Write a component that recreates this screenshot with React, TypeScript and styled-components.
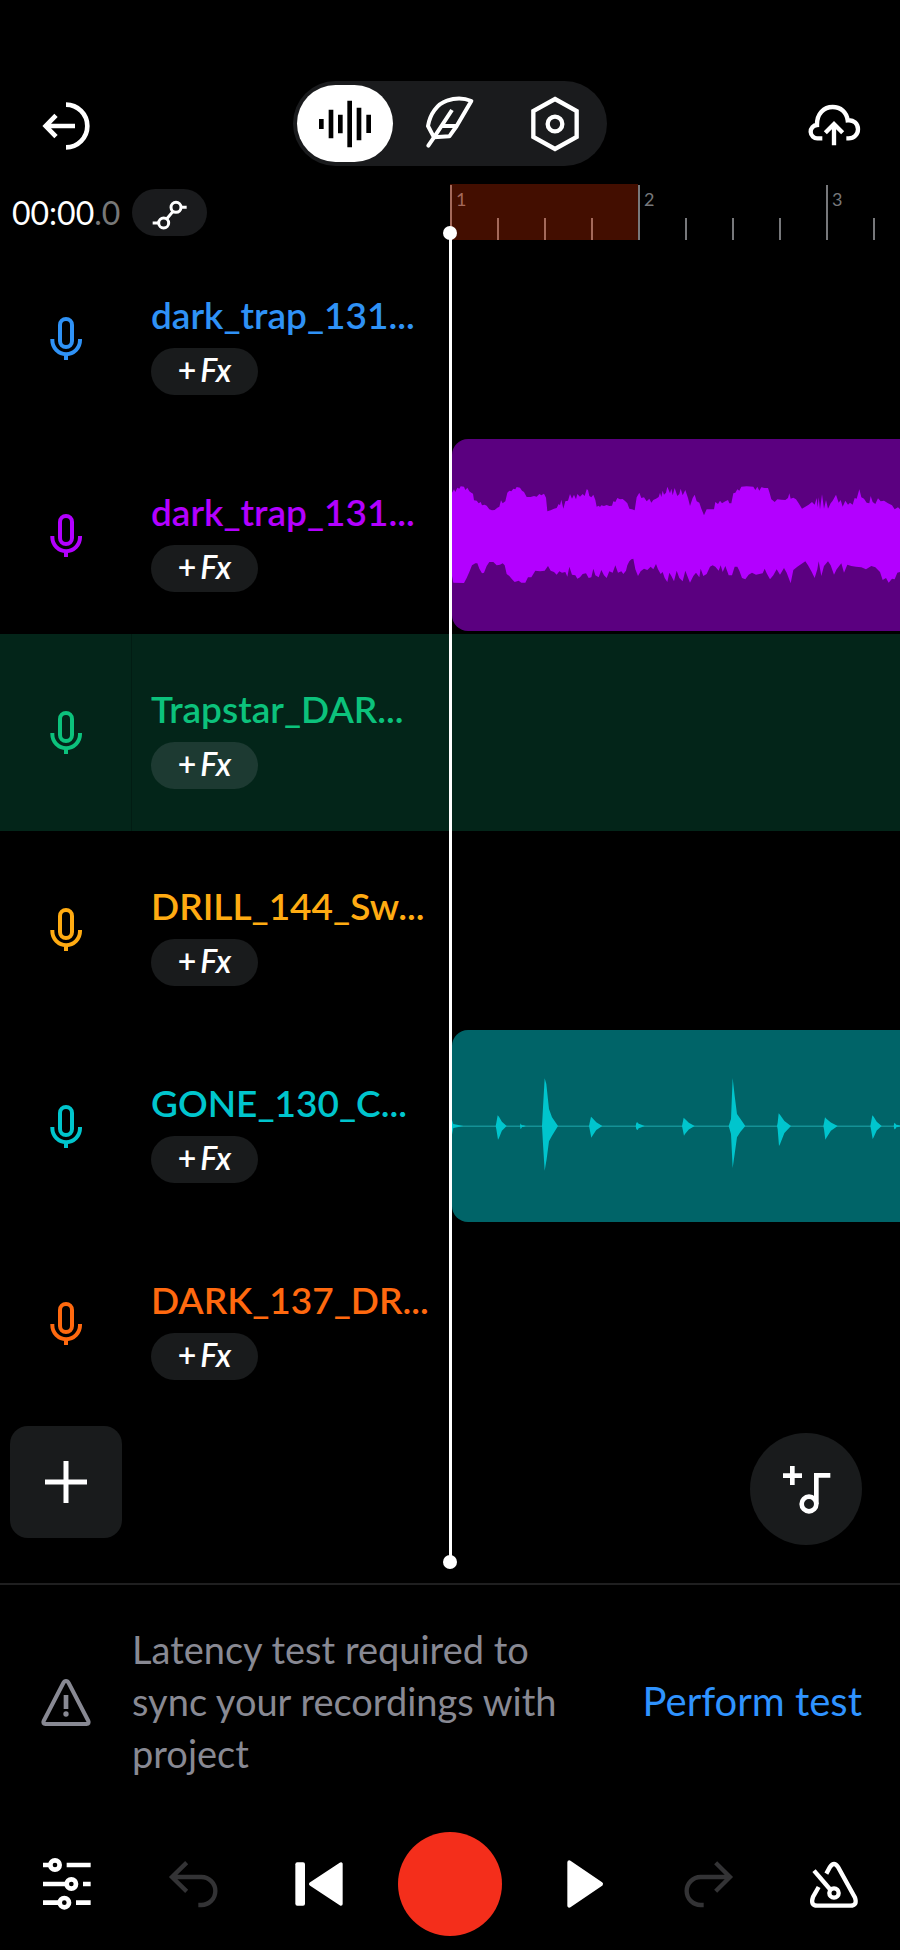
import React from "react";
import styled, { createGlobalStyle } from "styled-components";

const GlobalStyle = createGlobalStyle`
  * { box-sizing: border-box; }
  body { margin: 0; background: #000; }
  button { border: 0; padding: 0; margin: 0; background: none; color: inherit; font: inherit; cursor: pointer; }
`;

const Screen = styled.main`
  display: flex;
  flex-direction: column;
  min-height: 100vh;
  padding-top: 81px;
  overflow: hidden;
  background: #000;
  color: #fff;
  font-family: Lato, "Open Sans", sans-serif;
`;

const Header = styled.header`
  display: flex;
  align-items: center;
  justify-content: space-between;
`;

const HeaderButton = styled.button`
  display: grid;
  place-items: center;
  width: 132px;
  padding-top: 4px;
`;

const ViewSwitch = styled.nav`
  display: flex;
  gap: 9px;
  padding: 4px;
  border-radius: 43px;
  background: #1a1b1d;
`;

const ViewButton = styled.button<{ $active?: boolean }>`
  display: grid;
  place-items: center;
  width: 96px;
  height: 77px;
  border-radius: 39px;
  background: ${(p) => (p.$active ? "#fff" : "transparent")};
  color: ${(p) => (p.$active ? "#000" : "#fff")};
`;

const Timeline = styled.section`
  position: relative;
  margin-top: 18px;
  border-bottom: 2px solid #1f1f20;
`;

const TimeRow = styled.div`
  display: grid;
  grid-template-columns: 50% 50%;
  height: 56px;
`;

const Clock = styled.div`
  display: flex;
  align-items: center;
  gap: 11px;
  padding-left: 12px;
  font-size: 32px;
`;

const Time = styled.time`
  width: 109px;
  span { color: #777; }
`;

const AutomationButton = styled.button`
  display: grid;
  place-items: center;
  width: 75px;
  height: 47px;
  border-radius: 24px;
  background: #1a1b1d;
`;

const Ruler = styled.div`
  display: flex;
  overflow: hidden;
`;

const Bar = styled.div<{ $loop?: boolean }>`
  display: grid;
  flex: 0 0 188px;
  grid-template-columns: repeat(4, 1fr);
  align-items: end;
  color: ${(p) => (p.$loop ? "#a4695b" : "#77787b")};
  background: ${(p) => (p.$loop ? "#430e00" : "transparent")};
`;

const Beat = styled.span<{ $first?: boolean }>`
  height: ${(p) => (p.$first ? 55 : 22)}px;
  padding: 3px 0 0 4px;
  border-left: 2px solid currentColor;
  font-size: 18px;
  line-height: 22px;
`;

const TrackList = styled.ul`
  list-style: none;
  margin: 0;
  padding: 0;
`;

const Track = styled.li<{ $selected?: boolean }>`
  display: grid;
  grid-template-columns: 50% 50%;
  height: 197px;
  background: ${(p) => (p.$selected ? "#032519" : "transparent")};
`;

const TrackHead = styled.div`
  display: grid;
  grid-template-columns: 132px minmax(0, 1fr);
`;

const TrackIcon = styled.div<{ $color: string; $selected?: boolean }>`
  display: grid;
  place-items: center;
  padding-bottom: 2px;
  color: ${(p) => p.$color};
  border-right: 1px solid ${(p) => (p.$selected ? "#021c13" : "transparent")};
`;

const TrackInfo = styled.div`
  display: flex;
  flex-direction: column;
  align-items: flex-start;
  gap: 10px;
  padding: 52px 0 0 19px;
`;

const TrackName = styled.h2<{ $color: string }>`
  margin: 0;
  color: ${(p) => p.$color};
  font-size: 37px;
  font-weight: 600;
  line-height: 46px;
  white-space: nowrap;
`;

const FxButton = styled.button<{ $selected?: boolean }>`
  display: flex;
  align-items: center;
  justify-content: center;
  gap: 4px;
  width: 107px;
  height: 47px;
  padding-bottom: 4px;
  border-radius: 24px;
  background: ${(p) => (p.$selected ? "#1d3a32" : "#191b1c")};
  color: #fff;
  font-size: 32px;
  font-weight: 600;
  line-height: 36px;
  em { font-style: italic; }
`;

const Clip = styled.div<{ $color: string }>`
  height: 192px;
  margin: 2px 0 0 2px;
  overflow: hidden;
  border-radius: 16px 0 0 16px;
  background: ${(p) => p.$color};
  svg { display: block; width: 100%; height: 100%; }
`;

const Actions = styled.div`
  display: flex;
  align-items: flex-start;
  justify-content: space-between;
  height: 161px;
  padding: 4px 38px 0 10px;
`;

const AddTrack = styled.button`
  display: grid;
  place-items: center;
  width: 112px;
  height: 112px;
  border-radius: 18px;
  background: #191b1c;
`;

const AddSound = styled(AddTrack)`
  margin-top: 7px;
  border-radius: 50%;
`;

const Playhead = styled.div`
  position: absolute;
  top: 49px;
  bottom: 21px;
  left: 50%;
  width: 3px;
  margin-left: -1px;
  background: #fff;
  &::before, &::after {
    content: "";
    position: absolute;
    left: -6px;
    width: 14px;
    height: 14px;
    border-radius: 50%;
    background: #fff;
  }
  &::before { top: -7px; }
  &::after { bottom: -7px; }
`;

const Notice = styled.section`
  display: grid;
  grid-template-columns: 132px minmax(0, 450px) 1fr;
  align-items: center;
  padding: 38px 38px 38px 0;
  color: #888993;
`;

const NoticeIcon = styled.div`
  display: grid;
  place-items: center;
`;

const NoticeText = styled.p`
  margin: 0;
  font-size: 38px;
  line-height: 52px;
`;

const TestButton = styled.button`
  justify-self: end;
  color: #2f93ff;
  font-size: 40px;
  line-height: 52px;
  white-space: nowrap;
`;

const Transport = styled.footer`
  display: grid;
  grid-template-columns: repeat(7, 1fr);
  align-items: center;
  justify-items: center;
  padding: 15px 2px 14px;
`;

const TransportButton = styled.button`
  display: grid;
  place-items: center;
  &:disabled { color: #333335; }
`;

const RecordButton = styled.button`
  width: 104px;
  height: 104px;
  border-radius: 50%;
  background: #f42e1b;
`;

const Svg = styled.svg`
  display: block;
  width: 52px;
  height: 52px;
  overflow: visible;
`;

type IconProps = { width?: number; children: React.ReactNode };

const Icon = ({ width = 13, children }: IconProps) => (
  <Svg viewBox="0 0 156 156" fill="none" stroke="currentColor" strokeWidth={width} aria-hidden="true">
    {children}
  </Svg>
);

const ExitIcon = () => (
  <Icon width={14}>
    <path d="M78 14a64 64 0 0 1 0 128" />
    <path d="M105 78H18M48 46L17 78l31 32" />
  </Icon>
);

const WaveIcon = () => (
  <Icon width={14}>
    <path d="M7 63v30M36 35v86M64 50v56M92 8v140M120 29v98M149 50v55" />
  </Icon>
);

const FeatherIcon = () => (
  <Icon width={12}>
    <path strokeLinejoin="round" d="M30 118L12 84c6-36 27-66 57-76 22-8 48-10 73 1L98 84 76 115z" />
    <path strokeLinecap="round" d="M13 143l17-25" />
    <path d="M30 118L84 36M56 84h42" />
  </Icon>
);

const HexIcon = () => (
  <Icon>
    <path d="M78 3l65 36v78l-65 36-65-36V39z" />
    <circle cx="78" cy="78" r="22" />
  </Icon>
);

const CloudIcon = () => (
  <Icon>
    <path d="M43 115H29a20 20 0 0 1-2-40c-1-34 21-54 47-54 24 0 42 16 45 40 18-2 31 10 31 27 0 15-12 27-28 27h-7" />
    <path d="M78 136V72M52 98l26-26 26 26" />
  </Icon>
);

const AutomationIcon = () => (
  <Icon width={9}>
    <circle cx="59" cy="102" r="15" />
    <circle cx="96" cy="55" r="15" />
    <path d="M26 102h18M111 55h17M68 90l19-23" />
  </Icon>
);

const MicIcon = () => (
  <Icon width={12}>
    <rect x="60" y="21" width="36" height="84" rx="18" />
    <path d="M37 81v4a41 41 0 0 0 83 0v-4M78 126v18" />
  </Icon>
);

const PlusIcon = () => (
  <Icon width={15}>
    <path d="M15 78h126M78 15v126" />
  </Icon>
);

const AddNoteIcon = () => (
  <Icon width={14}>
    <path d="M9 38h57M37 9v57M109 123V37h42" />
    <circle cx="87" cy="123" r="22" />
  </Icon>
);

const WarningIcon = () => (
  <Icon width={12}>
    <path d="M78 18q-5 0-8 6L11 138q-4 8 6 9h122q10-1 6-9L86 24q-3-6-8-6z" />
    <path d="M78 60v42" strokeWidth={14} />
    <circle cx="78" cy="117" r="8" fill="currentColor" stroke="none" />
  </Icon>
);

const MixerIcon = () => (
  <Icon width={14}>
    <path d="M9 21h22M80 21h72M9 78h71M129 78h23M9 134h50M108 134h44" />
    <circle cx="45" cy="21" r="14" />
    <circle cx="94" cy="78" r="14" />
    <circle cx="73" cy="134" r="14" />
  </Icon>
);

const UndoIcon = () => (
  <Icon>
    <path d="M56 14L12 57l44 43M12 57h88a42 42 0 0 1 0 84h-9" />
  </Icon>
);

const RedoIcon = () => (
  <Icon>
    <path d="M107 14l43 43-43 43M150 57H62a42 42 0 0 0 0 84h9" />
  </Icon>
);

const PreviousIcon = () => (
  <Icon width={10}>
    <rect x="-2" y="13" width="29" height="130" rx="6" fill="currentColor" stroke="none" />
    <path d="M44 78l91-60v120z" fill="currentColor" strokeLinejoin="round" />
  </Icon>
);

const PlayIcon = () => (
  <Icon width={12}>
    <path d="M52 13l95 65-95 65z" fill="currentColor" strokeLinejoin="round" />
  </Icon>
);

const MetronomeIcon = () => (
  <Icon>
    <path d="M55 47l11-20q12-18 24 0l51 92q8 24-14 24H28q-22 0-13-26l17-30" />
    <path d="M18 38l50 58" />
    <circle cx="78" cy="105" r="14" />
  </Icon>
);

const LOUD_TOP =
  "36,190 42,180 46,188 52,175 58,178 62,171 72,172 76,182 82,175 88,186 94,190 99,193 102,213 110,214 116,222 122,218 126,228 134,226 140,229 148,240 156,243 164,242 172,235 178,232 183,213 188,222 196,216 202,190 208,184 214,186 220,178 226,180 230,173 240,175 246,184 252,188 260,203 272,203 282,200 290,202 298,194 304,198 312,193 318,205 322,246 332,243 342,238 350,236 356,224 360,228 364,211 370,238 376,216 384,214 390,194 396,208 402,196 408,210 412,194 420,202 428,194 434,200 440,180 444,182 448,200 454,204 460,196 466,212 470,232 476,229 480,233 484,228 492,230 500,227 508,230 516,229 520,216 526,218 532,206 540,210 548,209 556,216 562,222 568,238 576,240 584,243 590,204 598,190 604,206 612,204 620,216 628,208 634,220 640,212 648,208 656,203 660,190 664,203 668,184 672,196 678,190 682,172 690,192 694,178 698,198 704,176 712,200 718,194 722,178 728,198 736,182 744,206 750,230 758,206 764,196 770,216 778,220 784,238 792,258 800,240 812,240 822,240 826,218 834,224 840,214 846,222 856,216 864,212 868,222 874,222 880,192 886,190 892,180 898,184 904,172 920,171 940,172 946,182 952,172 958,184 964,174 974,176 984,176 988,188 994,210 1004,218 1012,210 1024,211 1036,212 1044,206 1048,192 1052,208 1060,205 1068,210 1076,222 1086,238 1096,232 1106,226 1116,218 1124,226 1130,206 1133,234 1136,204 1140,240 1146,195 1152,238 1158,212 1164,238 1172,222 1178,214 1188,196 1196,220 1202,212 1208,232 1216,214 1224,226 1230,220 1238,226 1244,206 1250,208 1258,180 1264,204 1272,208 1280,220 1288,222 1292,200 1298,218 1306,224 1314,207 1322,216 1332,214 1344,222 1356,228 1364,240 1374,234 1380,240";

const LOUD_BOTTOM =
  "1380,428 1372,430 1364,450 1356,448 1346,460 1338,446 1328,452 1320,428 1306,414 1294,410 1278,420 1264,414 1248,412 1234,410 1222,406 1212,430 1204,402 1190,420 1182,436 1172,408 1164,396 1152,410 1144,440 1136,396 1132,420 1124,446 1114,426 1104,408 1096,396 1084,404 1072,412 1060,422 1052,462 1040,430 1032,416 1020,436 1010,420 1000,438 990,450 980,432 974,418 968,432 958,434 948,436 936,430 926,436 916,450 906,446 898,424 892,412 884,412 876,438 866,438 856,410 848,428 842,408 836,424 826,412 818,408 810,412 800,434 790,440 782,418 778,444 768,430 760,440 750,460 742,440 736,424 728,456 718,446 710,424 702,456 694,440 688,430 682,458 674,446 668,428 662,434 654,420 648,404 640,420 632,412 622,422 612,418 602,426 594,440 586,420 580,388 574,390 568,396 562,408 558,424 550,434 544,426 534,430 526,408 518,430 508,426 500,446 492,438 484,422 476,444 466,438 460,418 454,444 446,446 438,432 428,434 420,444 412,448 406,438 396,436 388,412 382,442 376,428 366,430 358,426 350,436 342,428 332,424 324,410 314,424 300,426 286,424 274,444 264,444 256,460 244,460 236,454 224,458 216,450 208,440 200,434 194,408 188,402 180,406 170,408 160,398 148,398 140,410 132,430 126,432 118,418 112,402 106,402 96,408 88,428 80,446 72,461 40,460 36,440";

const LoudWave = () => (
  <svg viewBox="36 29 1344 576" preserveAspectRatio="none" fill="#b300ff" aria-hidden="true">
    <polygon points={`${LOUD_TOP} ${LOUD_BOTTOM}`} />
  </svg>
);

/* start, peak, end, top and bottom of each soft hit */
const HITS = [
  [167, 174, 200, 284, 357],
  [240, 243, 258, 310, 324],
  [447, 454, 487, 288, 351],
  [587, 593, 614, 305, 328],
  [726, 732, 764, 291, 345],
  [1011, 1017, 1053, 278, 376],
  [1150, 1156, 1193, 290, 357],
  [1291, 1298, 1325, 284, 355],
  [1361, 1366, 1384, 308, 325],
];

const PercussionWave = () => (
  <svg viewBox="36 28 1344 576" preserveAspectRatio="none" fill="#00c5cd" aria-hidden="true">
    <rect x="36" y="315" width="1344" height="3" fill="#1fa9ad" />
    <path d="M36 298L40 310 70 316 40 322 36 342z" />
    {HITS.map(([start, peak, end, top, bottom]) => {
      const bend = peak + (end - peak) * 0.45;
      return (
        <path
          key={start}
          d={`M${start} 316L${start + 2} 306 ${peak - 1} ${top} ${peak + 3} ${top + 4} ${bend} ${316 - (316 - top) * 0.4} ${end} 316 ${bend} ${316 + (bottom - 316) * 0.35} ${peak + 3} ${bottom - 5} ${peak} ${bottom} ${start + 2} 326z`}
        />
      );
    })}
    <path d="M306 316L309 260 314 173 319 190 327 265 336 290 354 316 336 345 327 362 320 415 314 450 309 370z" />
    <path d="M866 316L873 295 878 172 884 225 891 280 901 294 916 316 901 334 891 350 884 400 878 442 873 340z" />
  </svg>
);

const TRACKS = [
  { name: "dark_trap_131...", color: "#2f92f6" },
  { name: "dark_trap_131...", color: "#b300ff", clip: "#5b0080", wave: <LoudWave /> },
  { name: "Trapstar_DAR...", color: "#0cc27c", selected: true },
  { name: "DRILL_144_Sw...", color: "#ffab12" },
  { name: "GONE_130_C...", color: "#00c5cd", clip: "#006468", wave: <PercussionWave /> },
  { name: "DARK_137_DR...", color: "#ff690f" },
];

export default function App() {
  return (
    <Screen>
      <GlobalStyle />
      <Header>
        <HeaderButton aria-label="Exit"><ExitIcon /></HeaderButton>
        <ViewSwitch aria-label="Views">
          <ViewButton $active aria-label="Tracks"><WaveIcon /></ViewButton>
          <ViewButton aria-label="Lyrics"><FeatherIcon /></ViewButton>
          <ViewButton aria-label="Settings"><HexIcon /></ViewButton>
        </ViewSwitch>
        <HeaderButton aria-label="Save to cloud"><CloudIcon /></HeaderButton>
      </Header>

      <Timeline>
        <TimeRow>
          <Clock>
            <Time>00:00<span>.0</span></Time>
            <AutomationButton aria-label="Automation"><AutomationIcon /></AutomationButton>
          </Clock>
          <Ruler>
            {[1, 2, 3].map((bar) => (
              <Bar key={bar} $loop={bar === 1}>
                <Beat $first>{bar}</Beat>
                <Beat />
                <Beat />
                <Beat />
              </Bar>
            ))}
          </Ruler>
        </TimeRow>
        <TrackList>
          {TRACKS.map((track, index) => (
            <Track key={index} $selected={track.selected}>
              <TrackHead>
                <TrackIcon $color={track.color} $selected={track.selected}><MicIcon /></TrackIcon>
                <TrackInfo>
                  <TrackName $color={track.color}>{track.name}</TrackName>
                  <FxButton $selected={track.selected}><span>+</span><em>Fx</em></FxButton>
                </TrackInfo>
              </TrackHead>
              {track.clip && <Clip $color={track.clip}>{track.wave}</Clip>}
            </Track>
          ))}
        </TrackList>
        <Actions>
          <AddTrack aria-label="Add track"><PlusIcon /></AddTrack>
          <AddSound aria-label="Add sound"><AddNoteIcon /></AddSound>
        </Actions>
        <Playhead />
      </Timeline>

      <Notice>
        <NoticeIcon><WarningIcon /></NoticeIcon>
        <NoticeText>Latency test required to sync your recordings with project</NoticeText>
        <TestButton>Perform test</TestButton>
      </Notice>

      <Transport>
        <TransportButton aria-label="Mixer"><MixerIcon /></TransportButton>
        <TransportButton aria-label="Undo" disabled><UndoIcon /></TransportButton>
        <TransportButton aria-label="Back to start"><PreviousIcon /></TransportButton>
        <RecordButton aria-label="Record" />
        <TransportButton aria-label="Play"><PlayIcon /></TransportButton>
        <TransportButton aria-label="Redo" disabled><RedoIcon /></TransportButton>
        <TransportButton aria-label="Metronome"><MetronomeIcon /></TransportButton>
      </Transport>
    </Screen>
  );
}
